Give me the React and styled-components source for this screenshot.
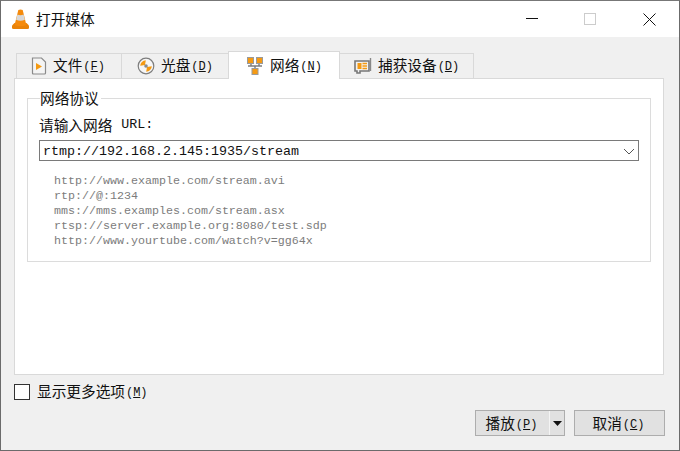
import styled, { createGlobalStyle } from "styled-components";

const CJK = `"Noto Sans CJK SC", "Liberation Sans", sans-serif`;
const MONO = `"Liberation Mono", "Noto Sans CJK SC", monospace`;

const Global = createGlobalStyle`
  html, body {
    margin: 0;
    padding: 0;
    background: #fff;
  }
  * {
    box-sizing: border-box;
  }
`;

const S = {
  Window: styled.div`
    width: 680px;
    height: 451px;
    display: flex;
    flex-direction: column;
    background: #f0f0f0;
    border: 1px solid #6b6b6b;
    border-top-color: #777;
    font-family: ${CJK};
    font-size: 14.67px;
    color: #111;
    overflow: hidden;
  `,
  TitleBar: styled.div`
    height: 36px;
    flex: none;
    display: flex;
    align-items: center;
    background: #fff;
    padding-left: 10px;
  `,
  TitleText: styled.div`
    margin-left: 6px;
    font-size: 14.67px;
    line-height: 20px;
  `,
  Controls: styled.div`
    margin-left: auto;
    display: flex;
    height: 100%;
    align-items: center;
    padding-right: 1px;
  `,
  WinButton: styled.div`
    width: 58px;
    height: 100%;
    display: flex;
    align-items: center;
    justify-content: center;
    padding-right: ${(p) => (p.$nudge ? 2 : 0)}px;
  `,
  Body: styled.div`
    flex: 1;
    display: flex;
    flex-direction: column;
    padding: 14px 15px 14px 13px;
  `,
  TabBar: styled.div`
    display: flex;
    height: 28px;
    flex: none;
    padding-left: 2px;
    align-items: flex-end;
    position: relative;
    z-index: 1;
  `,
  Tab: styled.div`
    width: ${(p) => p.$w}px;
    height: ${(p) => (p.$active ? 28 : 26)}px;
    margin-left: ${(p) => (p.$active ? -1 : 0)}px;
    display: flex;
    align-items: center;
    padding-left: ${(p) => p.$pad}px;
    gap: ${(p) => (p.$active ? 7 : 6)}px;
    background: ${(p) => (p.$active ? "#fff" : "#f0f0f0")};
    border: 1px solid #d9d9d9;
    border-left: ${(p) => (p.$first || p.$active ? "1px solid #d9d9d9" : "none")};
    border-bottom: ${(p) => (p.$active ? "none" : "1px solid #d9d9d9")};
    line-height: 20px;
    white-space: nowrap;
  `,
  Mnemonic: styled.span`
    font-family: ${MONO};
    font-size: 12px;
    margin-left: 1px;
    vertical-align: 1px;
    u {
      text-underline-offset: 1px;
    }
  `,
  Pane: styled.div`
    height: 297px;
    flex: none;
    margin-top: -1px;
    background: #fff;
    border: 1px solid #d9d9d9;
    padding: 19px 12px 0 12px;
  `,
  Group: styled.section`
    position: relative;
    height: 164px;
    border: 1px solid #dcdcdc;
    padding: 16px 11px 0 11px;
  `,
  Legend: styled.div`
    position: absolute;
    top: -11px;
    left: 12px;
    padding: 0 2px 0 0;
    background: #fff;
    line-height: 20px;
  `,
  FieldLabel: styled.div`
    line-height: 20px;
    display: flex;
    align-items: center;
    gap: 9px;
  `,
  UrlTail: styled.span`
    font-family: ${MONO};
    font-size: 13.33px;
  `,
  Combo: styled.div`
    margin-top: 5px;
    height: 21px;
    display: flex;
    align-items: center;
    justify-content: space-between;
    border: 1px solid #7a7a7a;
    padding: 1px 3px 0 3px;
    font-family: ${MONO};
    font-size: 13.33px;
    color: #111;
  `,
  Hints: styled.div`
    margin-top: 13px;
    padding-left: 15px;
    font-family: ${MONO};
    font-size: 11.67px;
    line-height: 15px;
    color: #7c7c7c;
  `,
  Footer: styled.div`
    display: flex;
    flex-direction: column;
    flex: 1;
    padding-top: 9px;
  `,
  CheckRow: styled.label`
    display: flex;
    align-items: center;
    gap: 7px;
    height: 16px;
    line-height: 16px;
  `,
  CheckBox: styled.span`
    width: 16px;
    height: 16px;
    background: #fff;
    border: 1px solid #333;
  `,
  Buttons: styled.div`
    display: flex;
    justify-content: flex-end;
    margin: 10px -1px 0 0;
    gap: 9px;
  `,
  SplitButton: styled.div`
    width: 90px;
    height: 26px;
    display: flex;
    background: #e1e1e1;
    border: 1px solid #adadad;
  `,
  SplitMain: styled.div`
    width: 74px;
    display: flex;
    align-items: center;
    justify-content: center;
    border-right: 1px solid #f4f4f4;
    padding: 0 2px 2px 0;
  `,
  SplitArrow: styled.div`
    flex: 1;
    display: flex;
    align-items: center;
    justify-content: center;
  `,
  Button: styled.div`
    width: 91px;
    height: 26px;
    display: flex;
    align-items: center;
    justify-content: center;
    background: #e1e1e1;
    border: 1px solid #adadad;
    padding: 0 2px 2px 0;
  `,
};

const Cone = () => (
  <svg width="19" height="21" viewBox="0 0 19 21">
    <path d="M1 16.5 L3.5 14 H15.5 L18 16.5 V19 Q18 20 16.5 20 H2.5 Q1 20 1 19 Z" fill="#e98207" />
    <path d="M7.3 1 Q9.5 .2 11.7 1 L15.4 16 Q9.5 18.4 3.6 16 Z" fill="#f58a0b" />
    <path d="M6.4 5.6 Q9.5 6.9 12.6 5.6 L13.9 10.8 Q9.5 12.5 5.1 10.8 Z" fill="#d8d8d8" />
  </svg>
);

const FileIcon = () => (
  <svg width="16" height="18" viewBox="0 0 16 18">
    <path d="M1.5 1 H10.5 L14.5 5 V16 Q14.5 17 13.5 17 H2.5 Q1.5 17 1.5 16 Z" fill="#f4f4f4" stroke="#8a8a8a" strokeWidth="1.2" />
    <path d="M5 6 L11 9.5 L5 13 Z" fill="#f59a12" />
  </svg>
);

const DiscIcon = () => (
  <svg width="18" height="18" viewBox="0 0 18 18">
    <circle cx="9" cy="9" r="7.8" fill="#f6f6f6" stroke="#7d7d7d" strokeWidth="1.2" />
    <path d="M8 8 L3.2 8.8 A5.8 5.8 0 0 1 8.8 3.2 Z" fill="#f59a12" />
    <path d="M10 10 L14.8 9.2 A5.8 5.8 0 0 1 9.2 14.8 Z" fill="#f59a12" />
    <circle cx="9" cy="9" r="1.8" fill="#8a8a8a" />
  </svg>
);

const NetworkIcon = () => (
  <svg width="16" height="18" viewBox="0 0 16 18">
    <path d="M4 6 V9 H12 V6 M1 9 H15 M8 9 V12" fill="none" stroke="#7d7d7d" strokeWidth="1.4" />
    <rect x="0.5" y="0.5" width="6" height="6" fill="#f59a12" stroke="#9a9a9a" />
    <rect x="9.5" y="0.5" width="6" height="6" fill="#f59a12" stroke="#9a9a9a" />
    <rect x="5" y="11.5" width="6" height="6" fill="#f59a12" stroke="#9a9a9a" />
  </svg>
);

const CardIcon = () => (
  <svg width="18" height="18" viewBox="0 0 18 18">
    <path d="M1 4 H15 V14 H6 V16 H3 V14 H1 Z" fill="#f2f2f2" stroke="#777" strokeWidth="1.6" />
    <path d="M16.5 1 V14" stroke="#888" strokeWidth="1.4" />
    <rect x="3.5" y="6" width="4" height="6" fill="#f59a12" />
    <path d="M8.5 6.5 H13 M8.5 9 H13 M8.5 11.5 H13" stroke="#f59a12" strokeWidth="1.4" />
  </svg>
);

const Mn = ({ k }) => (
  <S.Mnemonic>
    (<u>{k}</u>)
  </S.Mnemonic>
);

const hints = [
  "http://www.example.com/stream.avi",
  "rtp://@:1234",
  "mms://mms.examples.com/stream.asx",
  "rtsp://server.example.org:8080/test.sdp",
  "http://www.yourtube.com/watch?v=gg64x",
];

export default function App() {
  return (
    <S.Window>
      <Global />
      <S.TitleBar>
        <Cone />
        <S.TitleText>打开媒体</S.TitleText>
        <S.Controls>
          <S.WinButton $nudge>
            <svg width="12" height="12" viewBox="0 0 12 12">
              <path d="M0 5.5 H12" stroke="#111" />
            </svg>
          </S.WinButton>
          <S.WinButton $nudge>
            <svg width="12" height="12" viewBox="0 0 12 12">
              <rect x=".5" y=".5" width="11" height="11" fill="none" stroke="#ccc" />
            </svg>
          </S.WinButton>
          <S.WinButton>
            <svg width="13" height="13" viewBox="0 0 13 13">
              <path d="M.5 .5 L12.5 12.5 M12.5 .5 L.5 12.5" stroke="#111" />
            </svg>
          </S.WinButton>
        </S.Controls>
      </S.TitleBar>
      <S.Body>
        <S.TabBar>
          <S.Tab $w={106} $pad={14} $first>
            <FileIcon />
            <span>文件<Mn k="F" /></span>
          </S.Tab>
          <S.Tab $w={107} $pad={15}>
            <DiscIcon />
            <span>光盘<Mn k="D" /></span>
          </S.Tab>
          <S.Tab $w={112} $pad={18} $active>
            <NetworkIcon />
            <span>网络<Mn k="N" /></span>
          </S.Tab>
          <S.Tab $w={134} $pad={14}>
            <CardIcon />
            <span>捕获设备<Mn k="D" /></span>
          </S.Tab>
        </S.TabBar>
        <S.Pane>
          <S.Group>
            <S.Legend>网络协议</S.Legend>
            <S.FieldLabel>
              <span>请输入网络</span>
              <S.UrlTail>URL:</S.UrlTail>
            </S.FieldLabel>
            <S.Combo>
              <span>rtmp://192.168.2.145:1935/stream</span>
              <svg width="12" height="7" viewBox="0 0 12 7">
                <path d="M1 1 L6 6 L11 1" fill="none" stroke="#555" />
              </svg>
            </S.Combo>
            <S.Hints>
              {hints.map((h) => (
                <div key={h}>{h}</div>
              ))}
            </S.Hints>
          </S.Group>
        </S.Pane>
        <S.Footer>
          <S.CheckRow>
            <S.CheckBox />
            <span>显示更多选项<Mn k="M" /></span>
          </S.CheckRow>
          <S.Buttons>
            <S.SplitButton>
              <S.SplitMain>
                <span>播放<Mn k="P" /></span>
              </S.SplitMain>
              <S.SplitArrow>
                <svg width="9" height="5" viewBox="0 0 9 5">
                  <path d="M0 0 H9 L4.5 5 Z" fill="#111" />
                </svg>
              </S.SplitArrow>
            </S.SplitButton>
            <S.Button>
              <span>取消<Mn k="C" /></span>
            </S.Button>
          </S.Buttons>
        </S.Footer>
      </S.Body>
    </S.Window>
  );
}
